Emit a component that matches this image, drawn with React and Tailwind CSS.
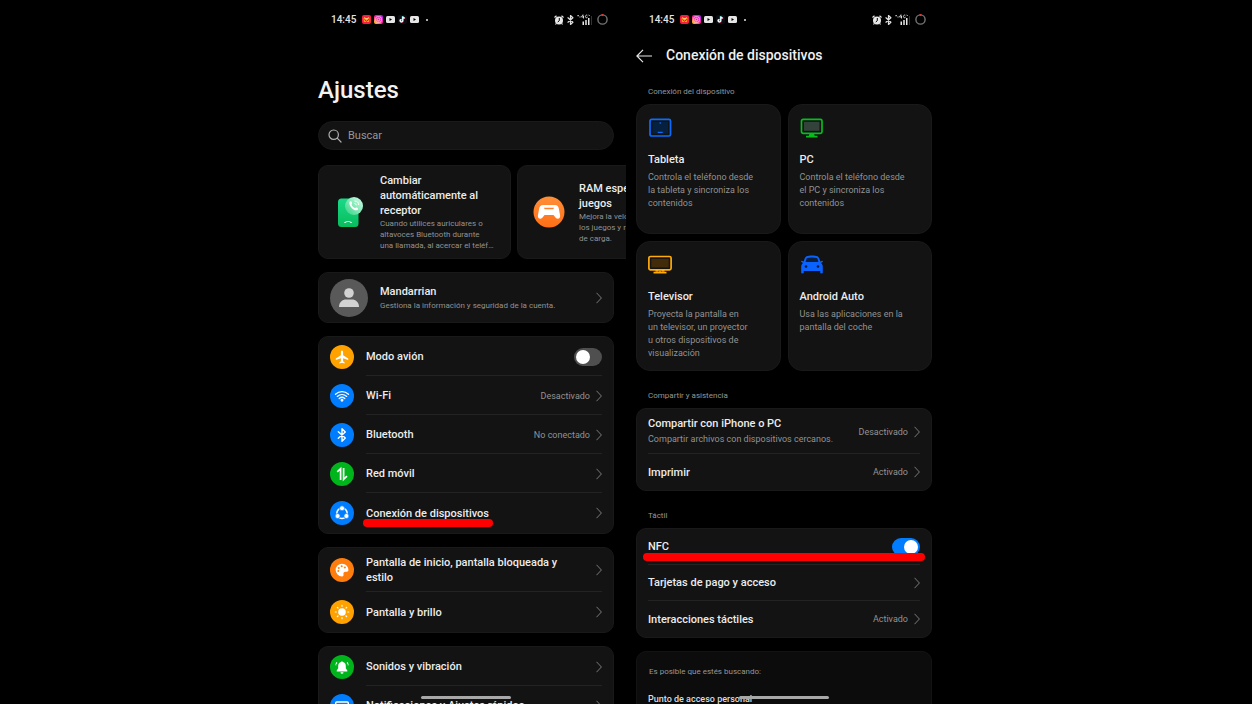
import React, { useState } from "react";

const Chevron = () => (
  <svg className="h-3 w-[6px] shrink-0" viewBox="0 0 6 12" fill="none" stroke="#7a7a7a">
    <path d="M0.5 0.8 5.4 6 0.5 11.2" />
  </svg>
);

const AlarmIcon = () => (
  <svg className="size-[10px]" viewBox="0 0 20 20" fill="#e8e8e8">
    <circle cx="10" cy="11" r="8" />
    <path d="M1 5 5 1.5M19 5 15 1.5M4.5 17 3 19M15.5 17 17 19" stroke="#e8e8e8" strokeWidth="2.4" />
    <path d="M10.6 6v5.4L7.5 14" stroke="#000" strokeWidth="2" fill="none" />
  </svg>
);

const BluetoothGlyph = ({ className, stroke = "#fff" }) => (
  <svg className={className} viewBox="0 0 12 18" fill="none" stroke={stroke} strokeWidth="2.2" strokeLinejoin="round" strokeLinecap="round">
    <path d="M1.5 5 10.3 13 6 17V1l4.3 4L1.5 13" />
  </svg>
);

const VideoIcon = () => (
  <svg className="h-[7px] w-[9px]" viewBox="0 0 18 14">
    <rect width="18" height="14" rx="3" fill="#e6e6e6" />
    <path d="M7 4v6l5-3z" fill="#000" />
  </svg>
);

const StatusBar = () => (
  <div className="flex h-[39px] items-center pr-[6px] pl-[13px] text-[10px] font-medium text-neutral-200">
    <span>14:45</span>
    <div className="ml-[6px] flex items-center gap-[3px]">
      <svg className="size-[9px]" viewBox="0 0 18 18">
        <rect width="18" height="18" rx="4" fill="#f5203f" />
        <path d="M3 6h12l-1 8H4z" fill="#ff9a1f" />
        <path d="M5 4.5c1.5 4 6.5 4 8 0" stroke="#ffd9dc" strokeWidth="1.8" fill="none" />
        <path d="m5 9 4 3.5 5-4" stroke="#d3122e" strokeWidth="2" fill="none" />
      </svg>
      <svg className="size-[9px]" viewBox="0 0 18 18" fill="none">
        <defs>
          <linearGradient id="insta" x1="1" y1="0" x2="0.2" y2="1">
            <stop stopColor="#a020ff" />
            <stop offset="0.55" stopColor="#ff1fa0" />
            <stop offset="1" stopColor="#ffc21f" />
          </linearGradient>
        </defs>
        <rect width="18" height="18" rx="4" fill="url(#insta)" />
        <rect x="3.5" y="3.5" width="11" height="11" rx="3" stroke="#ffe0f0" strokeWidth="1.5" />
        <circle cx="9" cy="9" r="2.5" stroke="#ffe0f0" strokeWidth="1.5" />
      </svg>
      <VideoIcon />
      <svg className="size-[9px]" viewBox="0 0 18 18" fill="none" strokeWidth="2.2">
        <rect width="18" height="18" rx="4" fill="#0b0b12" />
        <path d="M9.5 3v8.5a2.5 2.5 0 1 1-2.5-2.5M9.5 3c.5 2 2 3 4 3" stroke="#ff2b55" transform="translate(1 .6)" />
        <path d="M9.5 3v8.5a2.5 2.5 0 1 1-2.5-2.5M9.5 3c.5 2 2 3 4 3" stroke="#25f4ee" transform="translate(-.8 -.4)" />
        <path d="M9.5 3v8.5a2.5 2.5 0 1 1-2.5-2.5M9.5 3c.5 2 2 3 4 3" stroke="#fff" />
      </svg>
      <VideoIcon />
      <span className="ml-[4px] size-[2px] rounded-full bg-neutral-200" />
    </div>
    <div className="ml-auto flex items-center gap-[3px]">
      <AlarmIcon />
      <BluetoothGlyph className="h-[10px] w-[7px]" stroke="#e0e0e0" />
      <svg className="h-[11px] w-[15px]" viewBox="0 0 30 22" fill="#e8e8e8">
        <path d="M1 2h2.5v2.5H1zM5 5h2v2H5zM11 15h3v7h-3zM16.5 12h3v10h-3zM22 8h3v14h-3z" />
        <path d="M28 4h1.5v18H28z" fill="#444" />
        <path d="M12 1 9 6h5M13 3v6M20.5 2.5c-4-2-5 5-1.5 5 2 0 2-2 2-2M23 1.5l2.5 2.5" fill="none" stroke="#e8e8e8" strokeWidth="1.7" />
      </svg>
      <svg className="ml-[2px] size-[11px]" viewBox="0 0 22 22" fill="none" strokeWidth="2.8">
        <circle cx="11" cy="11" r="9.2" stroke="#747474" />
        <path d="M9 2a9.2 9.2 0 0 1 4 0" stroke="#ff3b30" strokeWidth="3" />
      </svg>
    </div>
  </div>
);

const GestureBar = () => (
  <div className="absolute bottom-[5px] left-[113px] h-[3px] w-[90px] rounded-full bg-[#a8a8a8]" />
);

const Switch = ({ id, defaultChecked = false }) => {
  const [on, setOn] = useState(defaultChecked);
  return (
    <input
      id={id}
      type="checkbox"
      role="switch"
      checked={on}
      onChange={() => setOn(!on)}
      className="flex h-[18px] w-7 shrink-0 cursor-pointer appearance-none items-center rounded-full bg-[#4f4f4f] px-[2px] before:size-[14px] before:rounded-full before:bg-white before:content-[''] checked:justify-end checked:bg-[#007dff]"
    />
  );
};

const icons = {
  plane: (
    <path fill="#fff" d="M12 5.6c.8 0 1.1.9 1.1 1.9v2.7l5.1 3.2v1.5l-5.1-1.6v2.9l1.5 1.2v1.1L12 17.8l-2.6.7v-1.1l1.5-1.2v-2.9l-5.1 1.6v-1.5l5.1-3.2V7.5c0-1 .3-1.9 1.1-1.9z" />
  ),
  wifi: (
    <g fill="none" stroke="#fff" strokeWidth="1.3" strokeLinecap="round">
      <path d="M5.5 10.3c3.8-3.5 9.2-3.5 13 0M7.3 12.4c2.8-2.5 6.6-2.5 9.4 0M9.2 14.5c1.7-1.5 3.9-1.5 5.6 0" />
      <circle cx="12" cy="16.3" r="0.8" fill="#fff" />
    </g>
  ),
  bluetooth: (
    <path d="M8.3 8.7 15.3 15 12 18.3V5.7L15.3 9l-7 6.3" fill="none" stroke="#fff" strokeWidth="1.4" strokeLinejoin="round" strokeLinecap="round" />
  ),
  mobile: (
    <path d="M7.2 9.8 10.6 6.7V18M13.6 6v11.3l3.4-3.1" fill="none" stroke="#fff" strokeWidth="1.7" />
  ),
  devices: (
    <g fill="#fff">
      <circle cx="12" cy="12.3" r="5.2" fill="none" stroke="#fff" strokeWidth="1.5" />
      <g stroke="#007dff" strokeWidth="0.7">
        <circle cx="12" cy="7.3" r="2.5" />
        <circle cx="7.6" cy="15" r="2.5" />
        <circle cx="16.4" cy="15" r="2.5" />
      </g>
    </g>
  ),
  palette: (
    <g>
      <path fill="#fff" d="M12 5.7a6.3 6.3 0 0 0 0 12.7c1.2 0 1.8-.8 1.5-1.8-.5-1.7.5-2.9 2-2.9h1.4c1 0 1.5-.7 1.5-1.7 0-3.5-2.8-6.3-6.4-6.3z" />
      <g fill="#ff7d0d">
        <circle cx="8.3" cy="13" r="1" />
        <circle cx="8.8" cy="9.9" r="1" />
        <circle cx="11.7" cy="8.2" r="1" />
        <circle cx="14.9" cy="9.6" r="1" />
      </g>
    </g>
  ),
  sun: (
    <g>
      <circle cx="12" cy="12" r="3.8" fill="#fff" />
      <path d="M12 5.3v1M12 17.7v1M5.3 12h1M17.7 12h1M7.3 7.3l.7.7M16 16l.7.7M7.3 16.7l.7-.7M16 8l.7-.7" stroke="#fff" strokeWidth="1.2" strokeLinecap="round" />
    </g>
  ),
  bell: (
    <g>
      <path fill="#fff" d="M12 6.2c.5 0 .8.4.8.9 2 .4 3 1.9 3 4v2.2l1.5 2.3v.9H6.7v-.9l1.5-2.3v-2.2c0-2.1 1-3.6 3-4 0-.5.3-.9.8-.9zM10.5 17.2h3a1.5 1.5 0 0 1-3 0z" />
      <path d="M7 7.5c-.8.8-1.1 1.6-1.1 2.7M17 7.5c.8.8 1.1 1.6 1.1 2.7" fill="none" stroke="#fff" strokeWidth="1.2" strokeDasharray="1.6 .6" />
    </g>
  ),
  panel: (
    <g fill="none" stroke="#fff" strokeWidth="1.4">
      <rect x="5.7" y="8" width="12.6" height="9" rx="1" />
      <path d="M6 11h12M10 11v6" />
    </g>
  ),
};

const RoundIcon = ({ name, color }) => (
  <svg className="size-6 shrink-0" viewBox="0 0 24 24">
    <circle cx="12" cy="12" r="12" fill={color} />
    {icons[name]}
  </svg>
);

const Group = ({ children }) => (
  <div className="rounded-[10px] border border-[#191919] bg-[#131313] px-[11px]">{children}</div>
);

// Row with a coloured round icon on the left
const IconRow = ({ icon, color, label, value, last, tall, marked }) => (
  <button type="button" className="flex w-full items-center gap-3 text-left">
    <RoundIcon name={icon} color={color} />
    <span
      className={`flex flex-1 items-center gap-[6px] ${
        tall ? "h-11" : last ? "h-10" : "h-[39px]"
      } ${last ? "" : "border-b border-[#232323] pt-px"}`}
    >
      <span className="relative max-w-[200px] text-[11px] leading-[15px] font-medium text-[#ececec]">
        {label}
        {marked && <span className="absolute -right-1 -bottom-[6px] -left-[3px] h-2 rounded-full bg-[#fe0000]" />}
      </span>
      <span className="ml-auto pt-px text-[9px] leading-[15px] text-[#929292]">{value}</span>
      <Chevron />
    </span>
  </button>
);

const PlainRow = ({ label, hint, value, last }) => (
  <button
    type="button"
    className={`flex w-full items-center gap-[6px] text-left ${hint ? "h-[45px] pt-px" : "h-9"} ${
      last ? "" : "border-b border-[#232323]"
    }`}
  >
    <span>
      <span className="block text-[11px] leading-[15px] font-medium text-[#ececec]">{label}</span>
      {hint && <span className="block text-[9px] leading-[16px] whitespace-nowrap text-[#929292]">{hint}</span>}
    </span>
    <span className="ml-auto pt-px text-[9px] leading-[15px] text-[#929292]">{value}</span>
    <Chevron />
  </button>
);

const Suggestion = ({ icon, title, text }) => (
  <article className="flex h-[94px] w-[193px] shrink-0 items-center rounded-[10px] border border-[#191919] bg-[#131313]">
    <div className="flex w-[61px] shrink-0 justify-center">{icon}</div>
    <div>
      <h2 className="text-[11px] leading-[15px] font-medium whitespace-pre-line text-[#ececec]">{title}</h2>
      <p className="text-[8px] leading-[11px] whitespace-pre text-[#929292]">{text}</p>
    </div>
  </article>
);

const ReceiverIcon = () => (
  <svg className="h-[31px] w-[26px]" viewBox="0 0 26 31">
    <defs>
      <linearGradient id="phone" x1="0" y1="0" x2="0" y2="1">
        <stop stopColor="#19d989" />
        <stop offset="1" stopColor="#08bd5c" />
      </linearGradient>
      <linearGradient id="bubble" x1="0" y1="1" x2="1" y2="0">
        <stop stopColor="#2fd283" />
        <stop offset="1" stopColor="#d5ffe9" />
      </linearGradient>
    </defs>
    <rect x="1" y="1.5" width="20.5" height="28.5" rx="3.5" fill="url(#phone)" />
    <path d="M7 26c.2-2.3 8-2.3 8.2 0l-2.2-.3-.3-.8H9.500l-.3.8z" fill="#e8fff3" />
    <circle cx="17" cy="9" r="9" fill="url(#bubble)" />
    <path d="M12.5 4.7c1-.9 2-.6 2.5 1 .3 1-.7 1.4-.3 2.2.7 1.5 1.6 2.3 2.9 2.9.9.4 1.2-.7 2.2-.3 1.5.7 1.7 1.5.8 2.5-3.5 2-9.400-4.500-8.100-8.300z" fill="#fff" />
    <path d="M17.5 4a4.2 4.2 0 0 1 4.2 4M17.5 6.5a2 2 0 0 1 1.8 1.8" stroke="#fff" fill="none" />
  </svg>
);

const GamepadIcon = () => (
  <svg className="size-8" viewBox="0 0 32 32">
    <defs>
      <linearGradient id="pad" x1="0" y1="0" x2="0" y2="1">
        <stop stopColor="#ff8f38" />
        <stop offset="1" stopColor="#ff6f16" />
      </linearGradient>
    </defs>
    <circle cx="16" cy="16" r="15.5" fill="url(#pad)" />
    <path fill="#fff" d="M10 9h12c2.3 0 3.3 1.3 3.8 3.5l1.3 7c.5 3-2.6 4.5-4.4 2.3L20.5 19h-9l-2.2 2.8c-1.8 2.2-4.9.7-4.4-2.3l1.3-7C6.7 10.3 7.7 9 10 9z" />
    <path d="M11 11.7h10c-.5 1.6-1 1.6-2 1.6h-6c-1 0-1.500 0-2-1.600z" fill="#ff8129" />
  </svg>
);

const TabletIcon = () => (
  <svg className="h-5 w-6" viewBox="0 0 24 20" fill="none" stroke="#0a6cff">
    <rect x="2" y="1.3" width="20.5" height="16.7" rx="1.6" strokeWidth="1.7" />
    <rect x="4.5" y="3.8" width="15.5" height="11.7" fill="#06213f" stroke="none" />
    <path d="M9.7 14.3h5M12.2 4.3v1.5" strokeWidth="1.3" />
  </svg>
);

const PcIcon = () => (
  <svg className="h-5 w-6" viewBox="0 0 24 20" fill="none" stroke="#05bd1c">
    <rect x="1.5" y="1.3" width="20.5" height="14" rx="1.6" strokeWidth="1.7" />
    <rect x="4" y="3.8" width="15.5" height="9" fill="#33433b" stroke="none" />
    <path d="M9.5 15.5H14l.7 2.200h2.800v1.700H6v-1.700h2.800z" fill="#05bd1c" stroke="none" />
  </svg>
);

const TvIcon = () => (
  <svg className="h-5 w-6" viewBox="0 0 24 20" fill="none" stroke="#ffab0a">
    <rect x="0.9" y="1.5" width="22.2" height="13.3" rx="1.6" strokeWidth="1.7" />
    <rect x="3.3" y="3.9" width="17.4" height="8.6" fill="#412b08" stroke="none" />
    <path d="M5.5 17.6h13M7.5 15.6h3M13.5 15.6h3M12 15.5v2" strokeWidth="1.6" />
  </svg>
);

const CarIcon = () => (
  <svg className="h-5 w-6" viewBox="0 0 24 20" fill="#0a62ff">
    <path d="M6.5 1.2C9 .2 15 .2 17.5 1.2c1.4.6 2.2 3 2.8 5.3l1.7-.8c1-.3 1.3 1 .4 1.5l-1.5.7c1.4 1 1.9 2.3 1.9 4v5.6c0 1.200-2.600 1.200-2.600 0v-1.400H3.800v1.400c0 1.200-2.600 1.200-2.600 0v-5.600c0-1.700.5-3 1.900-4l-1.500-.7c-.9-.5-.6-1.800.4-1.500l1.700.8c.6-2.300 1.400-4.700 2.800-5.300z" />
    <path d="M7.3 3c2.5-.7 6.9-.7 9.4 0 .9.5 1.300 2 1.700 4H5.600c.4-2 .8-3.500 1.700-4z" fill="#08203f" />
    <circle cx="6" cy="11.5" r="1.3" fill="#08183a" />
    <circle cx="18" cy="11.5" r="1.3" fill="#08183a" />
  </svg>
);

const deviceCards = [
  { icon: <TabletIcon />, title: "Tableta", text: "Controla el teléfono desde\nla tableta y sincroniza los\ncontenidos" },
  { icon: <PcIcon />, title: "PC", text: "Controla el teléfono desde\nel PC y sincroniza los\ncontenidos" },
  { icon: <TvIcon />, title: "Televisor", text: "Proyecta la pantalla en\nun televisor, un proyector\nu otros dispositivos de\nvisualización" },
  { icon: <CarIcon />, title: "Android Auto", text: "Usa las aplicaciones en la\npantalla del coche" },
];

const SectionLabel = ({ children }) => (
  <h2 className="px-3 text-[8px] leading-[12px] text-[#979797]">{children}</h2>
);

const SettingsScreen = () => (
  <section className="relative overflow-hidden pr-3 pl-[10px]">
    <StatusBar />
    <h1 className="pt-[36px] text-[24px] leading-[30px] font-medium text-[#f2f2f2]">Ajustes</h1>
    <div className="mt-4 flex h-[29px] items-center gap-[6px] rounded-full border border-[#191919] bg-[#131313] px-[9px]">
      <label htmlFor="search" aria-label="Buscar">
        <svg className="size-[14px]" viewBox="0 0 14 14" fill="none" stroke="#b0b0b0" strokeWidth="1.2" strokeLinecap="round">
          <circle cx="5.7" cy="5.7" r="4.7" />
          <path d="m9.2 9.2 3.8 3.8" />
        </svg>
      </label>
      <input
        id="search"
        type="search"
        placeholder="Buscar"
        className="min-w-0 flex-1 bg-transparent pt-[2px] text-[11px] text-white outline-none placeholder:text-[#979797]"
      />
    </div>

    <div className="mt-[15px] flex gap-[6px]">
      <Suggestion
        icon={<ReceiverIcon />}
        title={"Cambiar\nautomáticamente al\nreceptor"}
        text={"Cuando utilices auriculares o\naltavoces Bluetooth durante\nuna llamada, al acercar el teléf…"}
      />
      <Suggestion
        icon={<GamepadIcon />}
        title={"RAM especial para\njuegos"}
        text={"Mejora la velocidad de\nlos juegos y reduce el tiempo\nde carga."}
      />
    </div>

    <div className="mt-[13px] flex flex-col gap-[13px]">
      <button type="button" className="flex h-[51px] items-center rounded-[10px] border border-[#191919] bg-[#131313] px-[11px] text-left">
        <svg className="size-[38px]" viewBox="0 0 38 38">
          <circle cx="19" cy="19" r="19" fill="#595959" />
          <circle cx="19" cy="14" r="4.8" fill="#d2d2d2" />
          <path d="M9 28c0-5 3.5-7.5 7-7.5h6c3.5 0 7 2.5 7 7.500z" fill="#d2d2d2" />
        </svg>
        <span className="ml-3 flex-1 pt-[2px]">
          <span className="block text-[11px] leading-[15px] font-medium text-[#ececec]">Mandarrian</span>
          <span className="block text-[8px] leading-[14px] text-[#929292]">
            Gestiona la información y seguridad de la cuenta.
          </span>
        </span>
        <Chevron />
      </button>

      <Group>
        <div className="flex items-center gap-3">
          <RoundIcon name="plane" color="#ffa200" />
          <div className="flex h-[39px] flex-1 items-center justify-between border-b border-[#232323] pt-px">
            <label htmlFor="airplane" className="text-[11px] leading-[15px] font-medium text-[#ececec]">Modo avión</label>
            <Switch id="airplane" />
          </div>
        </div>
        <IconRow icon="wifi" color="#007dff" label="Wi-Fi" value="Desactivado" />
        <IconRow icon="bluetooth" color="#007dff" label="Bluetooth" value="No conectado" />
        <IconRow icon="mobile" color="#00b41c" label="Red móvil" />
        <IconRow icon="devices" color="#007dff" label="Conexión de dispositivos" last marked />
      </Group>

      <Group>
        <IconRow icon="palette" color="#ff7d0d" label="Pantalla de inicio, pantalla bloqueada y estilo" tall />
        <IconRow icon="sun" color="#ffa200" label="Pantalla y brillo" last />
      </Group>

      <Group>
        <IconRow icon="bell" color="#00b41c" label="Sonidos y vibración" />
        <IconRow icon="panel" color="#007dff" label="Notificaciones y Ajustes rápidos" />
      </Group>
    </div>
    <GestureBar />
  </section>
);

const ConnectionScreen = () => (
  <section className="relative overflow-hidden pr-3 pl-[10px]">
    <StatusBar />
    <header className="flex h-[33px] items-center gap-[14px]">
      <button type="button" aria-label="Atrás">
        <svg className="h-[14px] w-4" viewBox="0 0 16 14" fill="none" stroke="#e8e8e8" strokeWidth="1.2">
          <path d="M16 7H1M7 .8.9 7 7 13.2" />
        </svg>
      </button>
      <h1 className="text-[14px] font-medium text-[#f0f0f0]">Conexión de dispositivos</h1>
    </header>

    <div className="mt-[14px] mb-[6px]">
      <SectionLabel>Conexión del dispositivo</SectionLabel>
    </div>
    <div className="grid grid-cols-2 gap-[7px]">
      {deviceCards.map(({ icon, title, text }) => (
        <button
          key={title}
          type="button"
          className="flex h-[130px] flex-col items-start rounded-[14px] border border-[#191919] bg-[#131313] px-[11px] pt-[13px] text-left"
        >
          {icon}
          <span className="mt-[14px] text-[11px] leading-[15px] font-medium text-[#ececec]">{title}</span>
          <span className="mt-1 text-[9px] leading-[13px] whitespace-pre text-[#929292]">{text}</span>
        </button>
      ))}
    </div>

    <div className="mt-[19px] mb-[6px]">
      <SectionLabel>Compartir y asistencia</SectionLabel>
    </div>
    <Group>
      <PlainRow label="Compartir con iPhone o PC" hint="Compartir archivos con dispositivos cercanos." value="Desactivado" />
      <PlainRow label="Imprimir" value="Activado" last />
    </Group>

    <div className="mt-[19px] mb-[6px]">
      <SectionLabel>Táctil</SectionLabel>
    </div>
    <Group>
      <div className="relative flex h-9 items-center justify-between border-b border-[#232323]">
        <label htmlFor="nfc" className="text-[11px] leading-[15px] font-medium text-[#ececec]">NFC</label>
        <Switch id="nfc" defaultChecked />
        <span className="absolute -inset-x-[5px] bottom-[3px] h-2 rounded-full bg-[#fe0000]" />
      </div>
      <PlainRow label="Tarjetas de pago y acceso" />
      <PlainRow label="Interacciones táctiles" value="Activado" last />
    </Group>

    <div className="mt-[13px] h-[90px] rounded-[10px] border border-[#131313] bg-[#0c0c0c] pt-[14px]">
      <SectionLabel>Es posible que estés buscando:</SectionLabel>
      <a href="#hotspot" className="mt-[14px] block px-[11px] text-[9px] leading-[15px] font-medium text-[#dcdcdc]">
        Punto de acceso personal
      </a>
    </div>
    <GestureBar />
  </section>
);

export default function App() {
  return (
    <main className="flex h-screen justify-center overflow-hidden bg-black font-['Roboto',sans-serif]">
      <div className="grid h-full w-full max-w-[636px] grid-cols-2">
        <SettingsScreen />
        <ConnectionScreen />
      </div>
    </main>
  );
}
